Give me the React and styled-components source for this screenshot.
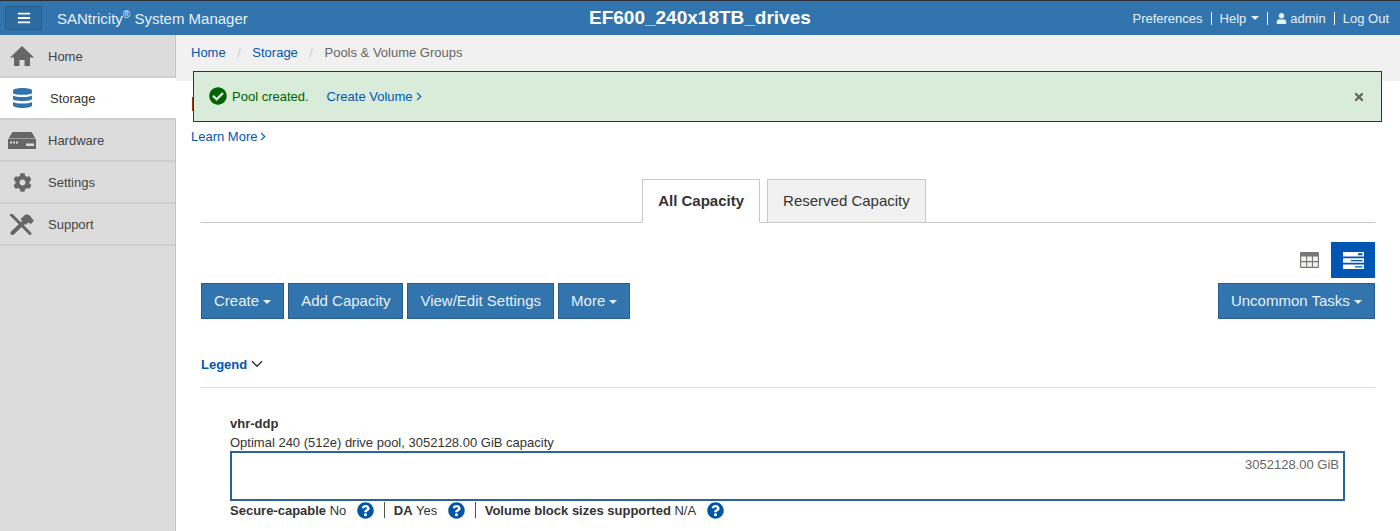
import styled, { createGlobalStyle } from "styled-components";
import {
  FaCog,
  FaUser,
  FaCheckCircle,
  FaQuestionCircle,
  FaTimes,
  FaBars,
} from "react-icons/fa";

const GlobalStyle = createGlobalStyle`
  html, body {
    margin: 0;
    padding: 0;
    height: 531px;
    overflow: hidden;
    background: #fff;
    font-family: "Liberation Sans", Arial, sans-serif;
    font-size: 13px;
    color: #333;
  }
  * { box-sizing: border-box; }
`;

function Chevron({ color = "#0056b3", size = 8 }) {
  return (
    <svg width={size * 0.75} height={size + 1} viewBox="0 0 6 9" fill="none">
      <path d="M1 .8 4.800 4.500 1 8.200" stroke={color} strokeWidth="1.100" />
    </svg>
  );
}

function HomeIcon() {
  return (
    <svg width="24" height="20" viewBox="0 0 24 20" fill="#666">
      <path d="M12 0 24 11.500H0z" />
      <path d="M4 11h16v9h-5.500v-6h-5v6H4z" />
    </svg>
  );
}

function StorageIcon() {
  return (
    <svg width="19" height="20" viewBox="0 0 19 20" fill="#3174ae">
      <path d="M0 2.500C0 1 4 0 9.500 0S19 1 19 2.500V5c0 1-4 1.800-9.500 1.800S0 6 0 5z" />
      <path d="M0 7.500C2 8.500 5.500 9 9.500 9s7.500-.5 9.500-1.500V11c0 1-4 2-9.500 2S0 12 0 11z" />
      <path d="M0 14c2 1 5.500 1.500 9.500 1.500S17 15 19 14v3.500c0 1.300-4 2.500-9.500 2.500S0 18.800 0 17.500z" />
    </svg>
  );
}

function HardwareIcon() {
  return (
    <svg width="28" height="17" viewBox="0 0 28 17">
      <path d="M4.500 0h19L27.500 6.500H.5z" fill="#666" />
      <path d="M0 7h28v10H0z" fill="#666" />
      <path d="M2 9.500h2v2H2zM5 9.500h2v2H5zM8 9.500h2v2H8zM18 11.500h8v2.500h-8z" fill="#ddd" />
    </svg>
  );
}

function SupportIcon() {
  return (
    <svg width="24" height="21" viewBox="0 0 24 21" fill="#666">
      <path d="M1.500 1 20 19.500" stroke="#666" strokeWidth="3" strokeLinecap="round" />
      <path d="M2.500 19 14 8" stroke="#666" strokeWidth="4" strokeLinecap="round" />
      <path d="M10.500 5 15.500.5c3-.5 5 1 6 3.500L24 6.500 21 10l-2.500-1.500L15.500 11z" />
    </svg>
  );
}

function GridIcon() {
  return (
    <svg width="19" height="16" viewBox="0 0 19 16">
      <rect x="0" y="0" width="19" height="16" rx="1" fill="#777" />
      <path
        d="M1.200 4.500h4.900v4.600H1.200zM7.200 4.500h4.700v4.600H7.200zM13 4.500h4.800v4.600H13zM1.200 10.200h4.900v4.600H1.200zM7.200 10.200h4.700v4.600H7.200zM13 10.200h4.800v4.600H13z"
        fill="#f5f3ee"
      />
    </svg>
  );
}

function RowsIcon() {
  return (
    <svg width="21" height="17" viewBox="0 0 21 17">
      <path d="M0 0h21v4.500H0zM0 6.200h21v4.500H0zM0 12.400h21v4.500H0z" fill="#fff" />
      <path d="M15 1.200h4.500v2H15zM8 8h11.500v1.300H8zM12 14.200h7.500v1.300H12z" fill="#0056b3" />
    </svg>
  );
}

const navItems = [
  { label: "Home", icon: <HomeIcon /> },
  { label: "Storage", icon: <StorageIcon />, active: true },
  { label: "Hardware", icon: <HardwareIcon /> },
  { label: "Settings", icon: <FaCog size={19} /> },
  { label: "Support", icon: <SupportIcon /> },
];

export default function App() {
  return (
    <Page>
      <GlobalStyle />
      <TopBar>
        <MenuButton>
          <FaBars size={14} color="#fff" />
        </MenuButton>
        <Brand>
          SANtricity<sup>®</sup> System Manager
        </Brand>
        <ArrayName>EF600_240x18TB_drives</ArrayName>
        <TopLinks>
          <TopLink>Preferences</TopLink>
          <TopLink>
            Help <Caret />
          </TopLink>
          <TopLink>
            <FaUser size={11} /> admin
          </TopLink>
          <TopLink>Log Out</TopLink>
        </TopLinks>
      </TopBar>

      <Body>
        <Sidebar>
          {navItems.map((item) => (
            <NavItem key={item.label} $active={item.active}>
              <NavIcon $active={item.active}>{item.icon}</NavIcon>
              <span>{item.label}</span>
            </NavItem>
          ))}
        </Sidebar>

        <Main>
          <Breadcrumbs>
            <Crumb>Home</Crumb>
            <Slash>/</Slash>
            <Crumb>Storage</Crumb>
            <Slash>/</Slash>
            <CurrentCrumb>Pools &amp; Volume Groups</CurrentCrumb>
          </Breadcrumbs>

          <Banner>
            <BannerIcon>
              <FaCheckCircle size={18} color="#006400" />
            </BannerIcon>
            <BannerText>Pool created.</BannerText>
            <BannerLink>
              Create Volume <Chevron />
            </BannerLink>
            <CloseButton>
              <FaTimes size={12} />
            </CloseButton>
          </Banner>

          <HiddenWarning />
          <LearnMore>
            Learn More <Chevron />
          </LearnMore>

          <Content>
            <Tabs>
              <Tab $active>All Capacity</Tab>
              <Tab>Reserved Capacity</Tab>
            </Tabs>

            <ViewToggle>
              <ViewButton>
                <GridIcon />
              </ViewButton>
              <ViewButton $active>
                <RowsIcon />
              </ViewButton>
            </ViewToggle>

            <Toolbar>
              <ActionButton>
                Create <ButtonCaret />
              </ActionButton>
              <ActionButton>Add Capacity</ActionButton>
              <ActionButton>View/Edit Settings</ActionButton>
              <ActionButton>
                More <ButtonCaret />
              </ActionButton>
              <ToolbarSpacer />
              <ActionButton>
                Uncommon Tasks <ButtonCaret />
              </ActionButton>
            </Toolbar>

            <Legend>
              Legend
              <svg width="12" height="8" viewBox="0 0 12 8" fill="none">
                <path d="M1 1.200 6 6.200 11 1.200" stroke="#333" strokeWidth="1.400" />
              </svg>
            </Legend>

            <Pool>
              <PoolName>vhr-ddp</PoolName>
              <PoolInfo>Optimal 240 (512e) drive pool, 3052128.00 GiB capacity</PoolInfo>
              <CapacityBar>3052128.00 GiB</CapacityBar>
              <PoolFacts>
                <Fact>
                  <span>
                    <b>Secure-capable</b> No
                  </span>
                  <HelpIcon />
                </Fact>
                <Fact>
                  <span>
                    <b>DA</b> Yes
                  </span>
                  <HelpIcon />
                </Fact>
                <Fact>
                  <span>
                    <b>Volume block sizes supported</b> N/A
                  </span>
                  <HelpIcon />
                </Fact>
              </PoolFacts>
            </Pool>
          </Content>
        </Main>
      </Body>
    </Page>
  );
}

function HelpIcon() {
  return (
    <HelpWrap>
      <FaQuestionCircle size={17} color="#0056a4" />
    </HelpWrap>
  );
}

const Page = styled.div`
  width: 1400px;
  height: 531px;
  overflow: hidden;
  display: flex;
  flex-direction: column;
`;

const TopBar = styled.header`
  height: 35px;
  flex: none;
  background: #3174ae;
  border-top: 1px solid #2b2f3a;
  display: flex;
  align-items: center;
  padding: 0 11px 0 5px;
  position: relative;
  color: #e8f1f8;
`;

const MenuButton = styled.div`
  width: 37px;
  height: 24px;
  background: #2c6aa0;
  border: 1px solid #285e8e;
  display: flex;
  align-items: center;
  justify-content: center;
`;

const Brand = styled.div`
  margin-left: 15px;
  font-size: 15px;
  color: #e8f1f8;
  sup {
    font-size: 10px;
    line-height: 0;
  }
`;

const ArrayName = styled.div`
  position: absolute;
  left: 589px;
  top: 6px;
  font-size: 19px;
  font-weight: bold;
  color: #fff;
`;

const TopLinks = styled.nav`
  margin-left: auto;
  display: flex;
  align-items: center;
`;

const TopLink = styled.span`
  font-size: 13px;
  line-height: 13px;
  padding: 0 8px;
  border-left: 1px solid #fff;
  display: flex;
  align-items: center;
  gap: 3px;
  white-space: nowrap;
  &:first-child {
    border-left: none;
  }
  &:last-child {
    padding-right: 0;
  }
`;

const Caret = styled.i`
  display: inline-block;
  width: 0;
  height: 0;
  margin-left: 2px;
  vertical-align: middle;
  border-top: 4px solid currentColor;
  border-left: 4px solid transparent;
  border-right: 4px solid transparent;
`;

const ButtonCaret = styled(Caret)`
  margin-left: 0;
`;

const Body = styled.div`
  flex: 1;
  display: flex;
  min-height: 0;
`;

const Sidebar = styled.aside`
  width: 176px;
  flex: none;
  background: #dcdcdc;
  border-right: 1px solid #c4c4c4;
`;

const NavItem = styled.div`
  height: 42px;
  display: flex;
  align-items: center;
  font-size: 13px;
  color: ${({ $active }) => ($active ? "#333" : "#444")};
  background: ${({ $active }) => ($active ? "#fff" : "#dcdcdc")};
  border-bottom: 2px solid #cfcfcf;
  margin-right: ${({ $active }) => ($active ? "-1px" : "0")};
  position: relative;
  &:first-child {
    height: 43px;
    padding-top: 1px;
  }
`;

const NavIcon = styled.span`
  width: ${({ $active }) => ($active ? "50px" : "48px")};
  padding-right: ${({ $active }) => ($active ? "6px" : "4px")};
  flex: none;
  color: #666;
  display: flex;
  align-items: center;
  justify-content: center;
`;

const Main = styled.main`
  flex: 1;
  min-width: 0;
  position: relative;
`;

const Breadcrumbs = styled.div`
  height: 46px;
  background: #f1f1f1;
  padding: 10px 15px 0;
  font-size: 13px;
  line-height: 15px;
`;

const Crumb = styled.a`
  color: #0056b3;
`;

const Slash = styled.span`
  color: #ccc;
  margin: 0 11.5px;
`;

const CurrentCrumb = styled.span`
  color: #666;
`;

const Banner = styled.div`
  position: absolute;
  left: 17px;
  top: 36px;
  width: 1189px;
  height: 51px;
  background: #d9ebd9;
  border: 1px solid #0a4f0a;
  display: flex;
  align-items: center;
  padding: 0 16px 0 15px;
  font-size: 13px;
  z-index: 2;
`;

const BannerIcon = styled.span`
  display: flex;
  margin-top: -2px;
`;

const BannerText = styled.span`
  color: #006400;
  margin-left: 5px;
`;

const BannerLink = styled.a`
  color: #0056b3;
  margin-left: 18px;
  display: flex;
  align-items: center;
  gap: 3px;
`;

const CloseButton = styled.span`
  margin-left: auto;
  color: #666;
  display: flex;
`;

const HiddenWarning = styled.div`
  position: absolute;
  left: 16px;
  top: 62px;
  width: 3px;
  height: 14px;
  background: #8a3b12;
`;

const LearnMore = styled.a`
  display: flex;
  align-items: center;
  gap: 3px;
  margin: 47px 0 0 15px;
  height: 16px;
  color: #0056b3;
  font-size: 13px;
`;

const Content = styled.div`
  padding: 0 25px;
`;

const Tabs = styled.div`
  margin-top: 35px;
  height: 44px;
  display: flex;
  justify-content: center;
  gap: 7px;
  border-bottom: 1px solid #c8c8c8;
  padding-right: 8px;
`;

const Tab = styled.div`
  height: 44px;
  padding: 0 15px 2px;
  display: flex;
  align-items: center;
  font-size: 15px;
  color: #333;
  font-weight: ${({ $active }) => ($active ? "bold" : "normal")};
  background: ${({ $active }) => ($active ? "#fff" : "#f1f1f1")};
  border: 1px solid #c8c8c8;
  border-bottom-color: ${({ $active }) => ($active ? "#fff" : "#c8c8c8")};
`;

const ViewToggle = styled.div`
  margin-top: 19px;
  display: flex;
  justify-content: flex-end;
`;

const ViewButton = styled.div`
  width: 44px;
  height: 36px;
  display: flex;
  align-items: center;
  justify-content: center;
  background: ${({ $active }) => ($active ? "#0056b3" : "transparent")};
`;

const Toolbar = styled.div`
  margin-top: 5px;
  display: flex;
  gap: 4px;
`;

const ToolbarSpacer = styled.div`
  flex: 1;
`;

const ActionButton = styled.button`
  height: 36px;
  padding: 0 12px 2px;
  background: #3174ae;
  border: 1px solid #285e8e;
  color: #e8f1f8;
  font-family: inherit;
  font-size: 15px;
  white-space: nowrap;
`;

const Legend = styled.div`
  margin-top: 37px;
  padding-bottom: 15px;
  border-bottom: 1px solid #ddd;
  height: 32px;
  display: flex;
  align-items: center;
  gap: 4px;
  color: #0056b3;
  font-weight: bold;
  font-size: 13px;
`;

const Pool = styled.section`
  padding: 28px 30px 0 29px;
`;

const PoolName = styled.div`
  font-weight: bold;
  font-size: 13px;
  line-height: 16px;
`;

const PoolInfo = styled.div`
  margin-top: 3px;
  font-size: 13px;
  line-height: 15px;
`;

const CapacityBar = styled.div`
  height: 50px;
  margin-top: 1px;
  border: 2px solid #2a6496;
  padding: 4px 4px;
  text-align: right;
  color: #666;
  font-size: 13px;
`;

const PoolFacts = styled.div`
  display: flex;
  font-size: 13px;
  height: 18px;
  margin-top: 0;
`;

const Fact = styled.div`
  display: flex;
  align-items: center;
  white-space: pre;
  padding: 0 10px 0 9px;
  border-left: 1px solid #555;
  height: 16px;
  margin-top: 1px;
  &:first-child {
    border-left: none;
    padding-left: 0;
  }
`;

const HelpWrap = styled.span`
  display: flex;
  margin-left: 10.5px;
`;
